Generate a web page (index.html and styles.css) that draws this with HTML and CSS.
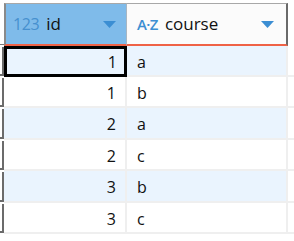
FILE: index.html
```html
<!DOCTYPE html>
<html>
<head>
<meta charset="utf-8">
<link rel="stylesheet" href="styles.css">
</head>
<body>
<div class="grid">
  <div class="gut-head"></div>
  <div class="th th-id">
    <span class="ico">123</span><span class="name">id</span>
    <svg class="tri" width="13" height="7" viewBox="0 0 13 7"><polygon points="0,0 13,0 6.5,7" fill="#3b8ed3"/></svg>
  </div>
  <div class="th th-course">
    <span class="ico az">A·Z</span><span class="name">course</span>
    <svg class="tri" width="13" height="7" viewBox="0 0 13 7"><polygon points="0,0 13,0 6.5,7" fill="#3b8ed3"/></svg>
  </div>
  <div class="rest-head"></div>

  <div class="gut"></div><div class="td num odd sel">1</div><div class="td odd">a</div><div class="rest"></div>
  <div class="gut"></div><div class="td num">1</div><div class="td">b</div><div class="rest"></div>
  <div class="gut"></div><div class="td num odd">2</div><div class="td odd">a</div><div class="rest"></div>
  <div class="gut"></div><div class="td num">2</div><div class="td">c</div><div class="rest"></div>
  <div class="gut"></div><div class="td num odd">3</div><div class="td odd">b</div><div class="rest"></div>
  <div class="gut"></div><div class="td num">3</div><div class="td">c</div><div class="rest"></div>
</div>
</body>
</html>
```

FILE: styles.css
```css
html, body {
  margin: 0;
  padding: 0;
  background: #ffffff;
  font-family: "Open Sans", "Noto Sans", sans-serif;
  overflow: hidden;
}
.grid {
  display: grid;
  grid-template-columns: 4px 123px 161px 1fr;
  grid-template-rows: 43px 31px 31px 32px 31px 32px 31px;
  padding-top: 3px;
}
.gut-head {
  border-bottom: 1px solid #777;
  margin-bottom: 1px;
}
.th {
  display: flex;
  align-items: center;
  border-top: 1px solid #a8a8a8;
  border-bottom: 2px solid #ef6246;
  box-sizing: border-box;
  padding-bottom: 1px;
}
.th-id {
  background: #7fbbea;
  border-left: 2px solid #8a8a8a;
  border-right: 1px solid #a8b6c2;
  padding-left: 7px;
}
.th-course {
  background: #fbfbfb;
  border-right: 2px solid #6a6a6a;
  padding-left: 10px;
}
.ico {
  color: #3d8fd2;
  font-size: 16px;
  letter-spacing: -0.4px;
  margin-right: 7px;
}
.th-id .ico { color: #4690cf; }
.az {
  font-size: 15px;
  font-weight: 600;
  letter-spacing: -0.6px;
  margin-right: 7px;
}
.name {
  color: #111;
  font-size: 17px;
}
.tri {
  margin-left: auto;
  margin-right: 10px;
  margin-top: 2px;
}
.th-course .tri { margin-right: 12px; }
.rest-head {
  visibility: hidden;
}
.gut {
  border-right: 2px solid #6b6b6b;
  border-bottom: 2px solid #6b6b6b;
  margin-bottom: 1px;
  margin-top: 1px;
}
.td {
  background: #ffffff;
  border-bottom: 2px solid #efefef;
  border-right: 2px solid #efefef;
  box-sizing: border-box;
  font-size: 16px;
  color: #111;
  display: flex;
  align-items: center;
  padding-left: 10px;
  padding-top: 2px;
}
.td.odd { background: #eaf4fe; }
.num {
  justify-content: flex-end;
  padding-left: 0;
  padding-right: 9px;
}
.sel {
  border: 3px solid #000;
  padding-right: 7px;
  padding-top: 1px;
}
.rest {
  border-bottom: 2px solid #efefef;
}
```
